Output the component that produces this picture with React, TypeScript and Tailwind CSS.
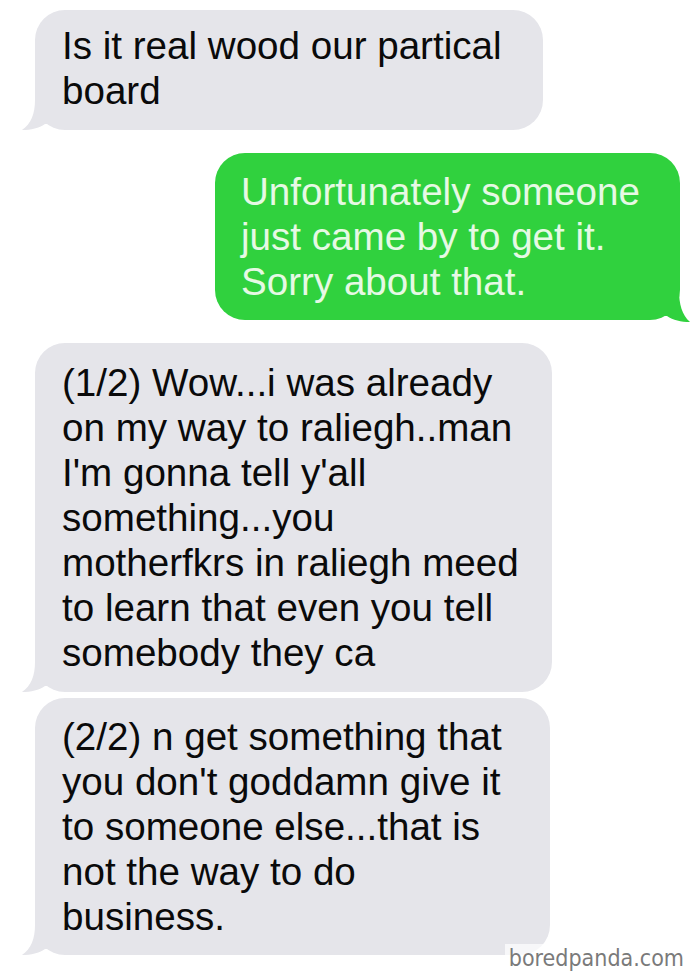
import React from "react";

const font = { fontFamily: '"Liberation Sans", Arial, sans-serif' };

const GrayTail = () => (
  <svg
    className="absolute -left-[14px] bottom-0"
    width="34"
    height="30"
    viewBox="0 0 34 30"
  >
    <path
      d="M14 0 C14 14 10 24 1 30 C10 30 18 28 24 24 L34 24 L34 0 Z"
      fill="#e5e5ea"
    />
  </svg>
);

const GreenTail = () => (
  <svg
    className="absolute -right-[11px] -bottom-[2px]"
    width="34"
    height="32"
    viewBox="0 0 34 32"
  >
    <path
      d="M22 0 C22 14 25 25 33 32 C24 32 16 30 10 26 L0 26 L0 0 Z"
      fill="#30d13e"
    />
  </svg>
);

const Bubble = ({
  lines,
  className,
}: {
  lines: string[];
  className: string;
}) => (
  <div
    className={`relative rounded-[30px] bg-[#e5e5ea] pl-[27px] text-[38.6px] leading-[45px] text-[#0a0a0a] ${className}`}
  >
    {lines.map((l, i) => (
      <p key={i} className="whitespace-nowrap">
        {l}
      </p>
    ))}
    <GrayTail />
  </div>
);

export default function App() {
  return (
    <div
      className="relative h-[978px] w-[700px] overflow-hidden bg-white"
      style={font}
    >
      <div className="flex flex-col pt-[10px]">
        <Bubble
          className="ml-[35px] w-[508px] pt-[13px] pb-[17px]"
          lines={["Is it real wood our partical", "board"]}
        />
        <div className="relative ml-[215px] mt-[23px] w-[465px] rounded-[30px] bg-[#30d13e] pl-[26px] pt-[16px] pb-[16px] text-[38.6px] leading-[45px] text-[#e6f9e4]">
          <p className="whitespace-nowrap">Unfortunately someone</p>
          <p className="whitespace-nowrap">just came by to get it.</p>
          <p className="whitespace-nowrap">Sorry about that.</p>
          <GreenTail />
        </div>
        <Bubble
          className="ml-[35px] mt-[23px] w-[517px] pt-[17px] pb-[17px]"
          lines={[
            "(1/2) Wow...i was already",
            "on my way to raliegh..man",
            "I'm gonna tell y'all",
            "something...you",
            "motherfkrs in raliegh meed",
            "to learn that even you tell",
            "somebody they ca",
          ]}
        />
        <Bubble
          className="ml-[35px] mt-[6px] w-[515px] pt-[16px] pb-[16px]"
          lines={[
            "(2/2) n get something that",
            "you don't goddamn give it",
            "to someone else...that is",
            "not the way to do",
            "business.",
          ]}
        />
      </div>
      <div className="absolute right-[12px] bottom-[6px] bg-white/70 px-1 text-[23px] leading-[28px] text-[#7a7a7a] [font-family:'DejaVu_Sans_Condensed','DejaVu_Sans',sans-serif]">
        boredpanda.com
      </div>
    </div>
  );
}
